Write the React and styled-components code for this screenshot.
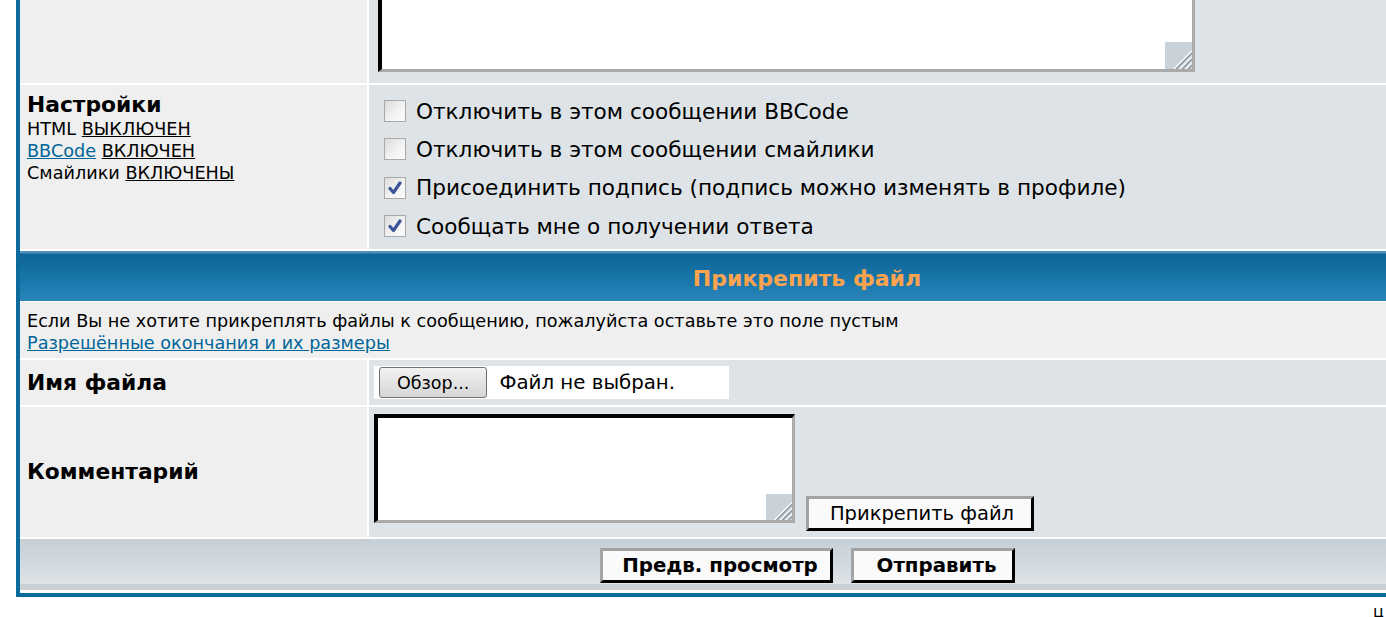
import React from 'react';
import styled, { createGlobalStyle } from 'styled-components';

const GlobalStyle = createGlobalStyle`
    html, body {
        margin: 0;
        overflow: hidden;
        background: #ffffff;
    }
    body {
        font-family: "DejaVu Sans", Verdana, sans-serif;
        color: #000000;
    }
`;

// the page is scrolled down to the bottom of the posting form
const Page = styled.div`
    margin-top: -137px;
    padding-left: 16px;
    width: 1700px;
`;

const Form = styled.div`
    background: #ffffff;
    border: 4px solid #0c6a9c;
    display: flex;
    flex-direction: column;
    gap: 2px;
    padding-bottom: 3px;
    width: 1574px;
`;

const Row = styled.div`
    display: grid;
    gap: 2px;
    grid-template-columns: 347px 1fr;
    min-height: ${(p) => p.$h || 0}px;
`;

const LeftCell = styled.div`
    align-items: flex-start;
    background: #efefef;
    display: flex;
    flex-direction: column;
    justify-content: ${(p) => (p.$top ? 'flex-start' : 'center')};
    padding: ${(p) => (p.$top ? '7px 7px' : '0 7px')};
`;

const RightCell = styled.div`
    background: #dee3e7;
    padding: ${(p) => p.$pad || '0'};
    display: flex;
    flex-direction: ${(p) => (p.$col ? 'column' : 'row')};
    align-items: ${(p) => (p.$col ? 'stretch' : 'flex-end')};
    gap: ${(p) => p.$gap || 0}px;
`;

const CellTitle = styled.span`
    font-size: 21.8px;
    font-weight: bold;
    line-height: 26px;
`;

const Small = styled.div`
    font-size: 17.65px;
    line-height: 22px;
`;

const Link = styled.a`
    color: ${(p) => (p.$blue ? '#006699' : '#000000')};
    text-decoration: underline;
`;

const Textarea = styled.div`
    position: relative;
    background: #ffffff;
    border-style: solid;
    border-width: 4px 3px 3px 4px;
    border-color: #000000 #aaaaaa #aaaaaa #000000;
    box-sizing: border-box;
    width: ${(p) => p.$w}px;
    height: ${(p) => p.$h}px;
    margin-bottom: ${(p) => p.$mb || 0}px;
`;

const Grip = styled.svg`
    position: absolute;
    right: 0;
    bottom: 0;
`;

const Option = styled.label`
    align-items: center;
    display: flex;
    font-size: 21.6px;
    gap: 10px;
    height: 38.3px;
`;

const Box = styled.span`
    background: linear-gradient(135deg, #dcdcdc 0%, #f4f4f4 60%, #fbfbfb 100%);
    border: 1px solid #a9a9a9;
    box-sizing: border-box;
    display: inline-flex;
    align-items: center;
    justify-content: center;
    height: 22px;
    width: 22px;
`;

const HeadBar = styled.div`
    align-items: center;
    background: linear-gradient(#4e90bb 0, #4e90bb 2px, #0d6497 3px, #1b77ab 30px, #2a86b9 100%);
    color: #ffa34f;
    display: flex;
    font-size: 22px;
    font-weight: bold;
    height: 50px;
    box-sizing: border-box;
    padding-top: 5px;
    justify-content: center;
    margin-bottom: -1px;
`;

const Note = styled.div`
    background: #efefef;
    padding: 8px 7px 4px;
    min-height: 56px;
    box-sizing: border-box;
`;

const FileBox = styled.div`
    align-items: center;
    background: #ffffff;
    display: flex;
    gap: 12px;
    height: 33px;
    padding: 0 0 0 5px;
    width: 350px;
    margin: 6px 0 0;
    align-self: flex-start;
    font-size: 19.8px;
`;

const Browse = styled.button`
    background: linear-gradient(#f3f3f3, #e4e4e4 50%, #d6d6d6);
    border: 1px solid #707070;
    border-radius: 3px;
    font-family: "DejaVu Sans", Verdana, sans-serif;
    font-size: 17.5px;
    height: 31px;
    padding: 0 17px;
    color: #000;
`;

const Button = styled.button`
    background: #fafafa;
    border-style: solid;
    border-width: 3px;
    border-color: #a3a3a3 #000000 #000000 #a3a3a3;
    color: #000000;
    font-family: "DejaVu Sans", Verdana, sans-serif;
    font-size: ${(p) => (p.$bold ? '19.8px' : '19.5px')};
    font-weight: ${(p) => (p.$bold ? 'bold' : 'normal')};
    height: 35px;
    width: ${(p) => p.$w}px;
    padding: 0 0 0 ${(p) => (p.$bold ? 8 : 4)}px;
`;

const BottomBar = styled.div`
    align-items: flex-start;
    background: linear-gradient(#c6cfd6 0%, #d3dadf 50%, #dde3e7 88%, #c9d0d5 89%, #c9d0d5 100%);
    display: flex;
    gap: 18px;
    height: 51px;
    justify-content: center;
    padding-top: 9px;
    box-sizing: border-box;
`;

const Footer = styled.div`
    font-size: 16px;
    line-height: 18px;
    padding: 6px 0 0 1357px;
`;

function ResizeGrip({ size = 27 }) {
    return (
        <Grip width={size} height={size} viewBox="0 0 27 27">
            <rect width="27" height="27" fill="#c9d1d9" />
            <path d="M27 9 L9 27" stroke="#ffffff" strokeWidth="1.5" />
            <path d="M27 11 L11 27" stroke="#8d959c" strokeWidth="1.5" />
            <path d="M27 15 L15 27" stroke="#ffffff" strokeWidth="1.5" />
            <path d="M27 17 L17 27" stroke="#8d959c" strokeWidth="1.5" />
            <path d="M27 21 L21 27" stroke="#ffffff" strokeWidth="1.5" />
            <path d="M27 23 L23 27" stroke="#8d959c" strokeWidth="1.5" />
        </Grip>
    );
}

function Checkbox({ checked, children }) {
    return (
        <Option>
            <Box>
                {checked && (
                    <svg width="14" height="14" viewBox="0 0 14 14">
                        <path d="M2 7.5 L5.5 11.5 L12 2" fill="none" stroke="#3b5597" strokeWidth="3.2" strokeLinecap="round" strokeLinejoin="round" />
                    </svg>
                )}
            </Box>
            {children}
        </Option>
    );
}

const options = [
    { label: 'Отключить в этом сообщении BBCode', checked: false },
    { label: 'Отключить в этом сообщении смайлики', checked: false },
    { label: 'Присоединить подпись (подпись можно изменять в профиле)', checked: true },
    { label: 'Сообщать мне о получении ответа', checked: true },
];

export default function App() {
    return (
        <>
            <GlobalStyle />
            <Page>
                <Form>
                    <Row>
                        <LeftCell />
                        <RightCell $pad="8px 9px 11px">
                            <Textarea $w={817} $h={197}>
                                <ResizeGrip />
                            </Textarea>
                        </RightCell>
                    </Row>
                    <Row $h={164}>
                        <LeftCell $top>
                            <CellTitle>Настройки</CellTitle>
                            <Small>HTML <Link>ВЫКЛЮЧЕН</Link></Small>
                            <Small><Link $blue>BBCode</Link> <Link>ВКЛЮЧЕН</Link></Small>
                            <Small>Смайлики <Link>ВКЛЮЧЕНЫ</Link></Small>
                        </LeftCell>
                        <RightCell $col $pad="7px 15px 4px">
                            {options.map((o) => (
                                <Checkbox key={o.label} checked={o.checked}>{o.label}</Checkbox>
                            ))}
                        </RightCell>
                    </Row>
                    <HeadBar>Прикрепить файл</HeadBar>
                    <Note>
                        <Small>Если Вы не хотите прикреплять файлы к сообщению, пожалуйста оставьте это поле пустым</Small>
                        <Small><Link $blue>Разрешённые окончания и их размеры</Link></Small>
                    </Note>
                    <Row $h={45}>
                        <LeftCell><CellTitle>Имя файла</CellTitle></LeftCell>
                        <RightCell $pad="0 5px">
                            <FileBox>
                                <Browse>Обзор...</Browse>
                                <span>Файл не выбран.</span>
                            </FileBox>
                        </RightCell>
                    </Row>
                    <Row $h={130}>
                        <LeftCell><CellTitle>Комментарий</CellTitle></LeftCell>
                        <RightCell $pad="7px 5px 6px" $gap={11}>
                            <Textarea $w={421} $h={109} $mb={8}>
                                <ResizeGrip size={26} />
                            </Textarea>
                            <Button $w={228}>Прикрепить файл</Button>
                        </RightCell>
                    </Row>
                    <BottomBar>
                        <Button $bold $w={233}>Предв. просмотр</Button>
                        <Button $bold $w={164}>Отправить</Button>
                    </BottomBar>
                </Form>
                <Footer>ц</Footer>
            </Page>
        </>
    );
}
